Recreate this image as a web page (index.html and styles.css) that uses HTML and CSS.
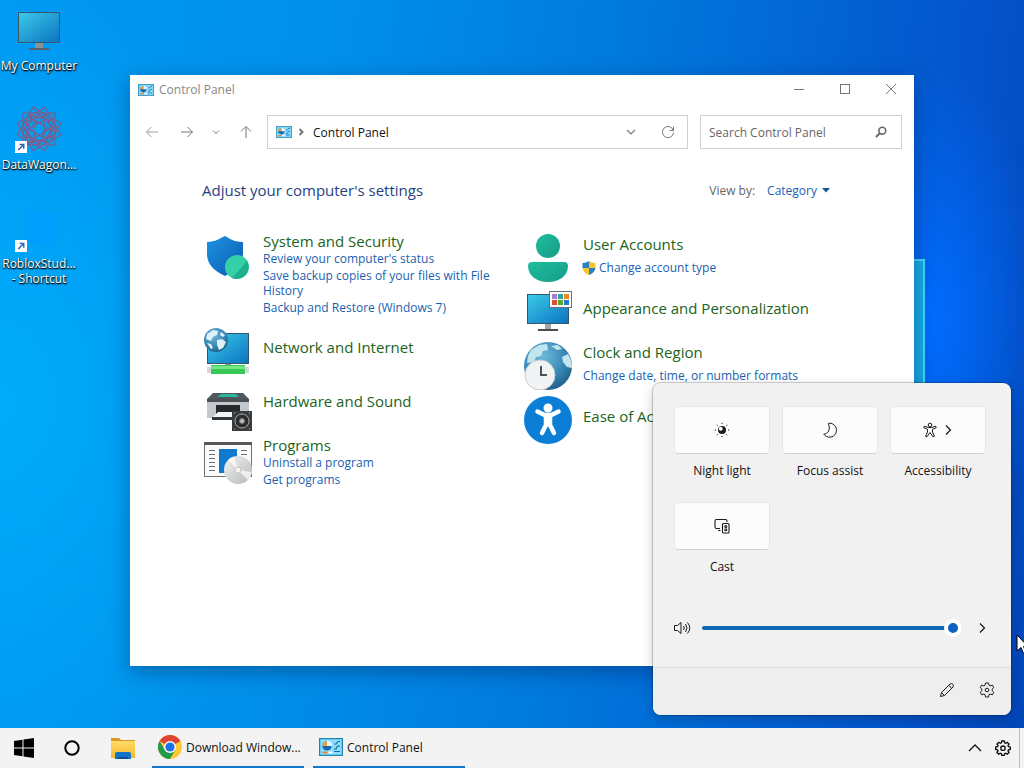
FILE: index.html
```
<!DOCTYPE html>
<html lang="en">
<head>
    <meta charset="UTF-8">
    <meta name="viewport" content="width=device-width, initial-scale=1.0">
    <title>Control Panel</title>
    <link rel="stylesheet" href="styles.css">
</head>
<body>
    <!-- Shared gradients and icons -->
    <svg class="defs" width="0" height="0" aria-hidden="true">
        <defs>
            <linearGradient id="screen" x1="0" y1="0" x2="1" y2="1">
                <stop offset="0" stop-color="#3bcbe8"/>
                <stop offset="1" stop-color="#0c72c2"/>
            </linearGradient>
            <linearGradient id="teal" x1="0" y1="0" x2="1" y2="1">
                <stop offset="0" stop-color="#1fbf9c"/>
                <stop offset="1" stop-color="#159b88"/>
            </linearGradient>
            <linearGradient id="blue" x1="0" y1="0" x2="1" y2="1">
                <stop offset="0" stop-color="#1d92e0"/>
                <stop offset="1" stop-color="#0a5cb4"/>
            </linearGradient>
            <radialGradient id="globe" cx="0.4" cy="0.3" r="0.8">
                <stop offset="0" stop-color="#6fb9dd"/>
                <stop offset="0.6" stop-color="#3585b3"/>
                <stop offset="1" stop-color="#1b557c"/>
            </radialGradient>
            <linearGradient id="folder" x1="0" y1="0" x2="0" y2="1">
                <stop offset="0" stop-color="#ffdc68"/>
                <stop offset="1" stop-color="#f5b72d"/>
            </linearGradient>
            <linearGradient id="silver" x1="0" y1="0" x2="1" y2="1">
                <stop offset="0" stop-color="#f4f4f4"/>
                <stop offset="1" stop-color="#b4b6b8"/>
            </linearGradient>
        </defs>
        <symbol id="cpanel" viewBox="0 0 24 18">
            <rect x="0.5" y="0.5" width="23" height="17" fill="#62cdf5" stroke="#2580ab"/>
            <rect x="2" y="2" width="20" height="14" fill="#8fdcfa"/>
            <circle cx="8" cy="8" r="4.6" fill="#1769b5"/>
            <path d="M8 8V2.6A5.2 5.2 0 0 1 13.2 8z" fill="#e8f8ff"/>
            <path d="M8 8l-4.6 0A4.6 4.6 0 0 1 8 3.4z" fill="#f0a13a"/>
            <path d="M15 6h2l2-2.5h2M15 11h2l1.5-3H21M15 13.5h6" fill="none" stroke="#1769b5" stroke-width="1.2"/>
            <path d="M3.5 14.5h5" stroke="#ef7f2e" stroke-width="1.8"/>
            <path d="M9.5 14.5h4" stroke="#fff" stroke-width="1.8"/>
        </symbol>
        <symbol id="shortcut" viewBox="0 0 13 13">
            <rect width="13" height="13" fill="#fff"/>
            <path d="M3.5 9.8L9 4.3M5 3.8h4.5v4.5" fill="none" stroke="#2b66b5" stroke-width="1.6"/>
        </symbol>
        <symbol id="right" viewBox="0 0 12 12">
            <path d="M4 1.5L8.5 6 4 10.5" fill="none" stroke="currentColor" stroke-width="1.2"/>
        </symbol>
        <symbol id="down" viewBox="0 0 12 12">
            <path d="M2 4l4 4 4-4" fill="none" stroke="currentColor" stroke-width="1.1"/>
        </symbol>
    </svg>

    <main class="desktop">
        <div class="light-beam"></div>

        <nav class="shortcuts" aria-label="Desktop">
            <a class="shortcut" href="#">
                <svg width="48" height="48" viewBox="0 0 48 48">
                    <rect x="3.5" y="6.5" width="41" height="30" fill="url(#screen)" stroke="#36566b"/>
                    <rect x="20" y="37" width="8" height="5" fill="#8b9299"/>
                    <rect x="14" y="42" width="20" height="2" fill="#5b6269"/>
                </svg>
                <span>My Computer</span>
            </a>
            <a class="shortcut" href="#">
                <svg width="48" height="48" viewBox="0 0 48 48">
                    <g fill="none" stroke="#855a86" stroke-width="1.1">
                        <rect x="8" y="8" width="32" height="32"/>
                        <rect x="8" y="8" width="32" height="32" transform="rotate(30 24 24)"/>
                        <rect x="8" y="8" width="32" height="32" transform="rotate(60 24 24)"/>
                        <rect x="13" y="13" width="22" height="22" transform="rotate(15 24 24)"/>
                        <rect x="13" y="13" width="22" height="22" transform="rotate(45 24 24)"/>
                        <rect x="13" y="13" width="22" height="22" transform="rotate(75 24 24)"/>
                        <path d="M24 24m-10 0l5-3 0-6 5 3 5-3 0 6 5 3-5 3 0 6-5-3-5 3 0-6z"/>
                        <circle cx="24" cy="24" r="6" stroke-width="3" stroke-dasharray="2 2"/>
                        <circle cx="24" cy="24" r="14" stroke-width="3" stroke-dasharray="2 5"/>
                    </g>
                    <use href="#shortcut" x="0" y="36" width="12" height="12"/>
                </svg>
                <span>DataWagon...</span>
            </a>
            <a class="shortcut" href="#">
                <svg width="48" height="48" viewBox="0 0 48 48">
                    <path d="M11 4l35 5-6 35-30-5z" fill="#009dff" opacity="0.6"/>
                    <use href="#shortcut" x="0" y="36" width="12" height="12"/>
                </svg>
                <span>RobloxStud...<br>- Shortcut</span>
            </a>
        </nav>

        <!-- Control Panel window -->
        <section class="window" aria-label="Control Panel">
            <header class="titlebar">
                <svg width="16" height="12"><use href="#cpanel"/></svg>
                <span class="title">Control Panel</span>
                <button aria-label="Minimize"><svg width="12" height="12" viewBox="0 0 12 12"><path d="M1 5.5h10"/></svg></button>
                <button aria-label="Maximize"><svg width="12" height="12" viewBox="0 0 12 12"><rect x="1.5" y="0.5" width="9" height="9"/></svg></button>
                <button aria-label="Close"><svg width="12" height="12" viewBox="0 0 12 12"><path d="M1 0l10 10M11 0L1 10"/></svg></button>
            </header>

            <div class="toolbar">
                <div class="history">
                    <button class="dim" aria-label="Back"><svg width="14" height="14" viewBox="0 0 14 14"><path d="M13 7H1.5M6.5 2l-5 5 5 5"/></svg></button>
                    <button aria-label="Forward"><svg width="14" height="14" viewBox="0 0 14 14"><path d="M1 7h11.5M7.5 2l5 5-5 5"/></svg></button>
                    <button class="recent" aria-label="Recent locations"><svg width="12" height="12" viewBox="0 0 12 12"><path d="M3 4.5l3 3 3-3"/></svg></button>
                    <button aria-label="Up"><svg width="14" height="14" viewBox="0 0 14 14"><path d="M7 13V1.5M2 6.5l5-5 5 5"/></svg></button>
                </div>
                <div class="address">
                    <svg width="16" height="12"><use href="#cpanel"/></svg>
                    <svg class="crumb" width="10" height="10" viewBox="0 0 10 10"><path d="M3.5 2l3 3-3 3"/></svg>
                    <span>Control Panel</span>
                    <button class="expand" aria-label="Previous locations"><svg width="12" height="12"><use href="#down"/></svg></button>
                    <button aria-label="Refresh"><svg width="14" height="14" viewBox="0 0 14 14"><path d="M12.3 5.2A5.6 5.6 0 1 0 12.6 7.5M12.5 1.5v4H8.5"/></svg></button>
                </div>
                <div class="search">
                    <input type="text" placeholder="Search Control Panel" aria-label="Search Control Panel">
                    <svg width="12" height="12" viewBox="0 0 12 12"><circle cx="7.3" cy="4.7" r="3.4" fill="none" stroke="#666" stroke-width="1.6"/><path d="M5 7L1 11" stroke="#666" stroke-width="2"/></svg>
                </div>
            </div>

            <div class="content">
                <div class="heading">
                    <h1>Adjust your computer's settings</h1>
                    <div class="view-by">
                        <span>View by:</span>
                        <button>Category <svg width="8" height="5" viewBox="0 0 8 5"><path d="M0 0h8L4 4.5z" fill="#0a5a9e"/></svg></button>
                    </div>
                </div>

                <div class="categories">
                    <div class="column">
                        <article class="category">
                            <svg width="48" height="48" viewBox="0 0 48 48">
                                <path d="M3 11c8 0 14-4 18-6 5 3 10 6 18 6v12c0 10-8 17-18 22C10 40 3 33 3 23z" fill="url(#blue)"/>
                                <circle cx="33" cy="36" r="12" fill="#35cfa8"/>
                                <path d="M28 47C35 40 40 33 43 30a12 12 0 0 1-15 17z" fill="#1cb08d"/>
                            </svg>
                            <div class="text">
                                <h2><a href="#">System and Security</a></h2>
                                <a href="#">Review your computer's status</a>
                                <a href="#">Save backup copies of your files with File History</a>
                                <a href="#">Backup and Restore (Windows 7)</a>
                            </div>
                        </article>
                        <article class="category single">
                            <svg width="48" height="48" viewBox="0 0 48 48">
                                <rect x="3.5" y="6.5" width="41" height="30" fill="url(#screen)" stroke="#36566b"/>
                                <rect x="21" y="37" width="6" height="4" fill="#899"/>
                                <rect x="3" y="40" width="42" height="6" fill="#d5d9dc"/>
                                <rect x="7" y="38" width="34" height="9" fill="#38c95a"/>
                                <rect x="7" y="39" width="34" height="3" fill="#74e885"/>
                                <circle cx="12" cy="13" r="12" fill="url(#globe)"/>
                                <path d="M3 7l6-4 5 1-1 4-4 2-2 4-5-2zM13 13l5-1 4 3-3 6-4 2-2-5zM17 5l4 3-2 2-3-2zM3 16l4 1 2 4-2 1z" fill="#dff1f8"/>
                            </svg>
                            <div class="text">
                                <h2><a href="#">Network and Internet</a></h2>
                            </div>
                        </article>
                        <article class="category single">
                            <svg width="48" height="50" viewBox="0 0 48 50">
                                <path d="M9 12h30l6 6H3z" fill="#50565b"/>
                                <path d="M17 13h15l3 3H13z" fill="#25b99a"/>
                                <path d="M3 19h42v18H3z" fill="#c3c8cd"/>
                                <rect x="3" y="18" width="42" height="3" fill="#4a5055"/>
                                <rect x="12" y="24" width="24" height="12" fill="#24282b"/>
                                <path d="M14 31h20l4 5H9z" fill="#f3f4f5"/>
                                <rect x="8" y="36" width="25" height="3" fill="#33383c"/>
                                <rect x="28" y="30" width="20" height="20" fill="#383a3c"/>
                                <circle cx="38" cy="40" r="7" fill="#2a2b2c" stroke="#a9a9a9"/>
                                <circle cx="38" cy="40" r="2.5" fill="#bbb" stroke="#777"/>
                                <path d="M30 32h1M45 32h1M30 48h1M45 48h1" stroke="#bbb"/>
                            </svg>
                            <div class="text">
                                <h2><a href="#">Hardware and Sound</a></h2>
                            </div>
                        </article>
                        <article class="category">
                            <svg width="48" height="52" viewBox="0 0 48 52">
                                <rect x="0.5" y="7.5" width="47" height="34" fill="#fafafa" stroke="#6d7174"/>
                                <rect x="0" y="7" width="48" height="3" fill="#55595c"/>
                                <path d="M5 15.5h6M5 19.5h6M5 23.500h6M5 27.5h6M5 31.5h6M5 35.5h6M37 15.5h6M37 19.5h6" stroke="#6b6f72"/>
                                <rect x="15" y="14" width="18" height="24" fill="#0f78cf"/>
                                <circle cx="34" cy="35" r="14" fill="url(#silver)"/>
                                <path d="M34 35L24 25a14 14 0 0 1 6-3.4zM34 35l14 2a14 14 0 0 1-4 8z" fill="#fff" opacity="0.7"/>
                                <circle cx="34" cy="35" r="3" fill="#f4f4f4" stroke="#c2c4c6"/>
                            </svg>
                            <div class="text">
                                <h2><a href="#">Programs</a></h2>
                                <a href="#">Uninstall a program</a>
                                <a href="#">Get programs</a>
                            </div>
                        </article>
                    </div>

                    <div class="column">
                        <article class="category spaced">
                            <svg width="48" height="48" viewBox="0 0 48 48">
                                <circle cx="24" cy="12" r="12" fill="url(#teal)"/>
                                <path d="M8 28h32q4 0 4 4c0 10-9 16-20 16S4 42 4 32q0-4 4-4z" fill="url(#teal)"/>
                            </svg>
                            <div class="text">
                                <h2><a href="#">User Accounts</a></h2>
                                <a class="admin" href="#">
                                    <svg width="14" height="14" viewBox="0 0 14 14">
                                        <path d="M7 0v7H0.5V2Q4 2 7 0zM7 14V7h6.5Q13 11.5 7 14z" fill="#2b7fc4"/>
                                        <path d="M7 0v7h6.5V2Q10 2 7 0zM7 14V7H0.5Q1 11.5 7 14z" fill="#f7c52b"/>
                                    </svg>
                                    Change account type</a>
                            </div>
                        </article>
                        <article class="category single">
                            <svg width="48" height="48" viewBox="0 0 48 48">
                                <rect x="3.5" y="6.5" width="41" height="29" fill="url(#screen)" stroke="#36566b"/>
                                <rect x="21" y="36" width="6" height="5" fill="#a0a6ab"/>
                                <rect x="14" y="41" width="20" height="2" fill="#474c50"/>
                                <rect x="25.500" y="3.5" width="22" height="16" fill="#fff" stroke="#6a6f74"/>
                                <path d="M28 6h5v5h-5z" fill="#b07cd0"/>
                                <path d="M34 6h5v5h-5z" fill="#2aa89a"/>
                                <path d="M40 6h5v5h-5z" fill="#f08a24"/>
                                <path d="M28 12h5v5h-5z" fill="#d8502f"/>
                                <path d="M34 12h5v5h-5z" fill="#5aa52c"/>
                                <path d="M40 12h5v5h-5z" fill="#1f78cc"/>
                            </svg>
                            <div class="text">
                                <h2><a href="#">Appearance and Personalization</a></h2>
                            </div>
                        </article>
                        <article class="category spaced">
                            <svg width="48" height="48" viewBox="0 0 48 48">
                                <circle cx="24" cy="24" r="24" fill="url(#globe)"/>
                                <path d="M7 8l8-5 8-1 1 6-5 1-2 5-5 1-2 5-7 1 1-7zM38 15l6-3q4 7 4 14l-5-1-4-5zM27 4l7-1 4 4-5 1z" fill="#c2e6ee"/>
                                <circle cx="16" cy="33" r="15" fill="#f2f3f4" stroke="#c6cacd"/>
                                <path d="M17 24v9h6" fill="none" stroke="#4e5357" stroke-width="2"/>
                            </svg>
                            <div class="text">
                                <h2><a href="#">Clock and Region</a></h2>
                                <a href="#">Change date, time, or number formats</a>
                            </div>
                        </article>
                        <article class="category single">
                            <svg width="48" height="48" viewBox="0 0 48 48">
                                <circle cx="24" cy="24" r="24" fill="#0b7fd6"/>
                                <circle cx="24" cy="12" r="4.5" fill="#fff"/>
                                <path d="M20 20h8v9h-8z" fill="#fff"/>
                                <path d="M13.500 15.500l7 3.500h7l7-3.500M22 20v9l-4 8M26 20v9l4 8" fill="none" stroke="#fff" stroke-width="4.5" stroke-linecap="round" stroke-linejoin="round"/>
                            </svg>
                            <div class="text">
                                <h2><a href="#">Ease of Access</a></h2>
                            </div>
                        </article>
                    </div>
                </div>
            </div>
        </section>

        <!-- Quick settings -->
        <section class="flyout" aria-label="Quick settings">
            <div class="tiles">
                <div class="tile">
                    <button id="night" aria-labelledby="night-label">
                        <svg width="16" height="16" viewBox="0 0 16 16">
                            <circle class="solid" cx="8" cy="8" r="4"/>
                            <circle cx="6.7" cy="6.7" r="2" fill="#fcfcfc"/>
                            <path d="M8 0.8v1.200M8 14v1.200M0.800 8H2M14 8h1.200M2.800 2.800l.9.9M12.300 12.300l.9.9M2.800 13.200l.9-.9M12.300 3.700l.9-.9"/>
                        </svg>
                    </button>
                    <label id="night-label" for="night">Night light</label>
                </div>
                <div class="tile">
                    <button id="focus" aria-labelledby="focus-label">
                        <svg width="16" height="16" viewBox="0 0 16 16"><path d="M7 1.2A7 7 0 1 1 1.8 12.2C6 11.5 9 8 6.3 1.5z" stroke-linejoin="round"/></svg>
                    </button>
                    <label id="focus-label" for="focus">Focus assist</label>
                </div>
                <div class="tile">
                    <button id="access" aria-labelledby="access-label">
                        <svg width="16" height="16" viewBox="0 0 16 16"><circle cx="8" cy="3" r="1.8" fill="none" stroke="#1b1b1b"/><path d="M2.3 4.2L6.3 5.5h3.4l4-1.3.5 1.5L10.5 7.3V10l2 4.3-1.5.5L8 10.5 5 14.8l-1.5-.5 2-4.3V7.3L1.800 5.7z" stroke-linejoin="round"/></svg>
                        <svg width="12" height="12"><use href="#right"/></svg>
                    </button>
                    <label id="access-label" for="access">Accessibility</label>
                </div>
                <div class="tile">
                    <button id="cast" aria-labelledby="cast-label">
                        <svg width="16" height="16" viewBox="0 0 16 16" fill="none" stroke="#1b1b1b" stroke-width="1.1"><path d="M13 4V3q0-1.5-1.5-1.5h-9Q1 1.5 1 3v6q0 1.5 1.5 1.5H6M4 12.5h2.5"/><rect x="8.5" y="5.5" width="6.5" height="9.5" rx="1"/><circle cx="11.8" cy="8.5" r="1"/><circle cx="11.8" cy="11.8" r="1"/></svg>
                    </button>
                    <label id="cast-label" for="cast">Cast</label>
                </div>
            </div>

            <div class="volume">
                <button aria-label="Mute"><svg width="18" height="14" viewBox="0 0 18 14"><path d="M1.5 4.5h3L8 1.5v11L4.5 9.5h-3zM10.5 5q1.5 2 0 4M12.5 3q3 4 0 8M14.5 1.5q4.5 5.5 0 11"/></svg></button>
                <input type="range" min="0" max="100" value="100" aria-label="Volume">
                <button aria-label="Sound output"><svg width="12" height="12"><use href="#right"/></svg></button>
            </div>

            <footer>
                <button aria-label="Edit quick settings"><svg width="16" height="16" viewBox="0 0 16 16"><path d="M1.5 14.5l1-4L11 2q1.5-1 2.8.2T14 5l-8.5 8.5zM9.7 3.3l3 3M2.5 10.5l3 3"/></svg></button>
                <button aria-label="All settings"><svg width="16" height="16" viewBox="0 0 16 16"><path d="M6.5 1h3l.5 2.2 1.2.7 2.2-.8 1.4 2.5L13.2 7v1.800l1.600 1.500-1.400 2.500-2.200-.8-1.200.7-.5 2.300h-3L6 12.700 4.800 12l-2.200.8-1.400-2.500L2.800 8.800V7L1.200 5.600l1.400-2.500 2.200.8L6 3.200z" stroke-linejoin="round"/><circle cx="8" cy="8" r="1.8"/></svg></button>
            </footer>
        </section>

        <svg class="cursor" width="14" height="20" viewBox="0 0 14 20"><path d="M1 1v16l4-3.5 2.5 6 2.5-1-2.5-6H12z" fill="#fff" stroke="#000"/></svg>
    </main>

    <footer class="taskbar">
        <button class="icon-button" aria-label="Start">
            <svg width="20" height="20" viewBox="0 0 20 20"><path d="M0 3l8.5-1.2v7.7H0zM9.5 1.6L20 0v9.5H9.5zM0 10.5h8.5v7.7L0 17zM9.5 10.5H20V20L9.5 18.4z"/></svg>
        </button>
        <button class="icon-button" aria-label="Cortana">
            <svg width="16" height="16" viewBox="0 0 16 16"><circle cx="8" cy="8" r="6.7" fill="none" stroke="#000" stroke-width="2"/></svg>
        </button>
        <button class="icon-button" aria-label="File Explorer">
            <svg width="24" height="22" viewBox="0 0 24 22">
                <path d="M0 1h8l2 2h14v6H0z" fill="#dc9722"/>
                <rect y="4" width="24" height="17" fill="url(#folder)"/>
                <path d="M4 22v-5q0-2 2-2h12q2 0 2 2v5z" fill="#1672c4"/>
                <path d="M7 20h10v2H7z" fill="#0b4f94"/>
            </svg>
        </button>
        <button class="task">
            <svg width="24" height="24" viewBox="0 0 24 24">
                <circle cx="12" cy="12" r="12" fill="#fcc934"/>
                <path d="M12 12L1.6 6A12 12 0 0 1 22.4 6z" fill="#e04235"/>
                <path d="M1.6 6A12 12 0 0 0 12 24l5.2-9L12 12 6.8 15z" fill="#229a4c"/>
                <circle cx="12" cy="12" r="6" fill="#fff"/>
                <circle cx="12" cy="12" r="4.6" fill="#1f72e6"/>
            </svg>
            <span>Download Window...</span>
        </button>
        <button class="task">
            <svg width="24" height="18"><use href="#cpanel"/></svg>
            <span>Control Panel</span>
        </button>
        <div class="tray">
            <button aria-label="Show hidden icons"><svg width="14" height="14" viewBox="0 0 14 14"><path d="M1 10l6-6 6 6" fill="none" stroke="#111" stroke-width="1.3"/></svg></button>
            <button aria-label="Settings"><svg width="16" height="16" viewBox="0 0 16 16" fill="none" stroke="#111"><path d="M6.8 1h2.4l.4 1.8 1.1.5 1.6-1L14 4l-1 1.6.5 1.1 1.8.4v2.3l-1.800.4-.5 1.100 1 1.600-1.700 1.700-1.600-1-1.100.5-.4 1.800H6.800l-.4-1.800-1.100-.5-1.600 1L2 12.500l1-1.600-.5-1.100-1.800-.4V7.100l1.800-.4L3 5.600 2 4l1.700-1.700 1.600 1 1.100-.5z" stroke-width="1.4"/><circle cx="8" cy="8.2" r="2.2" stroke-width="1.3"/></svg></button>
        </div>
    </footer>
</body>
</html>
```
FILE: styles.css
```
* {
    box-sizing: border-box;
}

body {
    margin: 0;
    height: 100vh;
    display: flex;
    flex-direction: column;
    overflow: hidden;
    font-family: 'Open Sans', 'Noto Sans', sans-serif;
    font-size: 12px;
    line-height: 15px;
    color: #111;
}

.defs {
    position: absolute;
}

button {
    display: flex;
    align-items: center;
    justify-content: center;
    padding: 0;
    border: none;
    background: none;
    font: inherit;
    color: inherit;
}

a {
    text-decoration: none;
}

/* Desktop */
.desktop {
    position: relative;
    flex: 1;
    min-height: 0;
    overflow: hidden;
    background:
        radial-gradient(ellipse 110px 260px at 91% 44%, #006cff 0%, rgba(0, 100, 255, 0) 100%),
        radial-gradient(ellipse 300px 420px at 0% 55%, #00acfa 0%, rgba(0, 172, 250, 0) 100%),
        linear-gradient(97deg, #0099f2 0%, #0090ea 30%, #0078dc 58%, #0454cc 88%, #0346b8 100%);
}

.light-beam {
    position: absolute;
    top: 259px;
    right: 99px;
    width: 160px;
    height: 300px;
    background: #16aae6;
    border: 2px solid #48d8f8;
}

.shortcuts {
    display: flex;
    flex-direction: column;
    gap: 21px;
    width: 78px;
    padding-top: 6px;
}

.shortcut {
    display: flex;
    flex-direction: column;
    align-items: center;
    gap: 4px;
    min-height: 78px;
    color: #fff;
    text-align: center;
    text-shadow: 1px 1px 2px #000, 0 1px 1px #000;
}

/* Window */
.window {
    position: absolute;
    top: 75px;
    right: 110px;
    bottom: 62px;
    left: 130px;
    background: #fff;
    box-shadow: 0 6px 20px rgba(0, 30, 80, 0.4);
}

.titlebar {
    display: flex;
    align-items: center;
    height: 29px;
    padding-left: 8px;
    color: #888;
}

.titlebar .title {
    flex: 1;
    padding-left: 5px;
}

.titlebar button {
    width: 46px;
    height: 29px;
}

.titlebar button svg,
.toolbar button svg,
.crumb {
    fill: none;
    stroke: #777;
}

.toolbar {
    display: flex;
    gap: 8px;
    padding: 11px 12px 0 8px;
}

.history {
    display: flex;
    align-items: center;
    gap: 8px;
}

.history button {
    width: 27px;
    height: 34px;
}

.history .recent {
    width: 16px;
}

.history .dim {
    opacity: 0.7;
}

.address,
.search {
    display: flex;
    align-items: center;
    height: 34px;
    border: 1px solid #d0d0d0;
}

.address {
    flex: 1;
    padding: 0 12px 0 8px;
}

.crumb {
    margin: 0 7px 0 4px;
    stroke-width: 2;
}

.address .expand {
    margin-left: auto;
    margin-right: 24px;
    color: #777;
}

.search {
    width: 202px;
    margin-left: 4px;
    padding: 0 14px 0 8px;
}

.search input {
    flex: 1;
    min-width: 0;
    padding: 0;
    border: none;
    outline: none;
    background: none;
    font: inherit;
}

.search input::placeholder {
    color: #666;
    opacity: 1;
}

.content {
    padding: 29px 84px 0 72px;
}

.heading {
    display: flex;
    align-items: center;
    justify-content: space-between;
    height: 24px;
}

h1 {
    margin: 0;
    font-size: 15px;
    font-weight: 400;
    line-height: 24px;
    color: #1f3f7f;
}

.view-by {
    display: flex;
    gap: 12px;
    color: #666;
}

.view-by button {
    gap: 5px;
    color: #1a5fb0;
}

.categories {
    display: grid;
    grid-template-columns: 1fr 1fr;
    gap: 14px;
    padding: 29px 0 0 2px;
}

.column {
    display: flex;
    flex-direction: column;
    gap: 6px;
}

.column + .column {
    padding-top: 3px;
}

.category {
    display: grid;
    grid-template-columns: 48px 1fr;
    gap: 11px;
    min-height: 48px;
}

.text {
    padding-bottom: 4px;
}

.text > a {
    display: block;
    margin-bottom: 2px;
    color: #1a5fb0;
}

.text > .admin {
    display: flex;
    align-items: center;
    gap: 3px;
    margin-left: -1px;
}

.single {
    height: 48px;
}

.single .text {
    padding-top: 10px;
}

.spaced h2 {
    margin-bottom: 6px;
}

h2 {
    margin: 0;
    font-size: 15px;
    font-weight: 400;
    line-height: 20px;
}

h2 a {
    color: #1b6420;
}

/* Quick settings */
.flyout {
    position: absolute;
    right: 13px;
    bottom: 13px;
    width: 358px;
    overflow: hidden;
    border-radius: 8px;
    background: #f1f1f1;
    box-shadow: 0 0 1px 1px rgba(0, 0, 0, 0.2), 0 4px 12px rgba(0, 0, 0, 0.2);
}

.tiles {
    display: grid;
    grid-template-columns: repeat(3, 1fr);
    gap: 24px 12px;
    padding: 23px 25px 0 21px;
}

.tile {
    display: flex;
    flex-direction: column;
    height: 72px;
}

.tile button {
    gap: 4px;
    height: 48px;
    border: 1px solid #e8e8e8;
    border-bottom-color: #d0d0d0;
    border-radius: 4px;
    background: #fcfcfc;
}

.tile label {
    padding-top: 9px;
    text-align: center;
}

.volume {
    display: flex;
    align-items: center;
    padding: 45px 20px 0;
}

.volume input {
    flex: 1;
    min-width: 0;
    height: 18px;
    margin: 0 11px;
    appearance: none;
    background: none;
}

.volume input::-webkit-slider-runnable-track {
    height: 4px;
    border-radius: 2px;
    background: #1068b4;
}

.volume input::-webkit-slider-thumb {
    appearance: none;
    width: 18px;
    height: 18px;
    margin-top: -7px;
    border: 4px solid #fff;
    border-radius: 50%;
    background: #0b62c0;
}

.flyout button svg path,
.flyout footer circle {
    fill: none;
    stroke: #1b1b1b;
}

.flyout .solid {
    fill: #1b1b1b;
}

.flyout .volume button {
    width: 18px;
}

.flyout footer {
    display: flex;
    align-items: center;
    justify-content: flex-end;
    gap: 24px;
    height: 48px;
    margin-top: 30px;
    padding: 0 16px 4px;
    border-top: 1px solid #dcdcdc;
    background: #eee;
}

.cursor {
    position: absolute;
    top: 634px;
    right: -6px;
}

/* Taskbar */
.taskbar {
    display: flex;
    height: 40px;
    background: #f3f3f3;
}

.icon-button {
    width: 48px;
}

.icon-button + .icon-button + .icon-button {
    width: 54px;
}

.task {
    justify-content: flex-start;
    gap: 4px;
    width: 152px;
    margin: 0 9px 0 2px;
    padding-left: 6px;
    border-bottom: 2px solid #1379cf;
}

.task + .task {
    margin-left: 0;
}

.tray {
    display: flex;
    gap: 13px;
    margin-left: auto;
    margin-right: 4px;
    padding-right: 8px;
    border-right: 1px solid #bbb;
}
```
